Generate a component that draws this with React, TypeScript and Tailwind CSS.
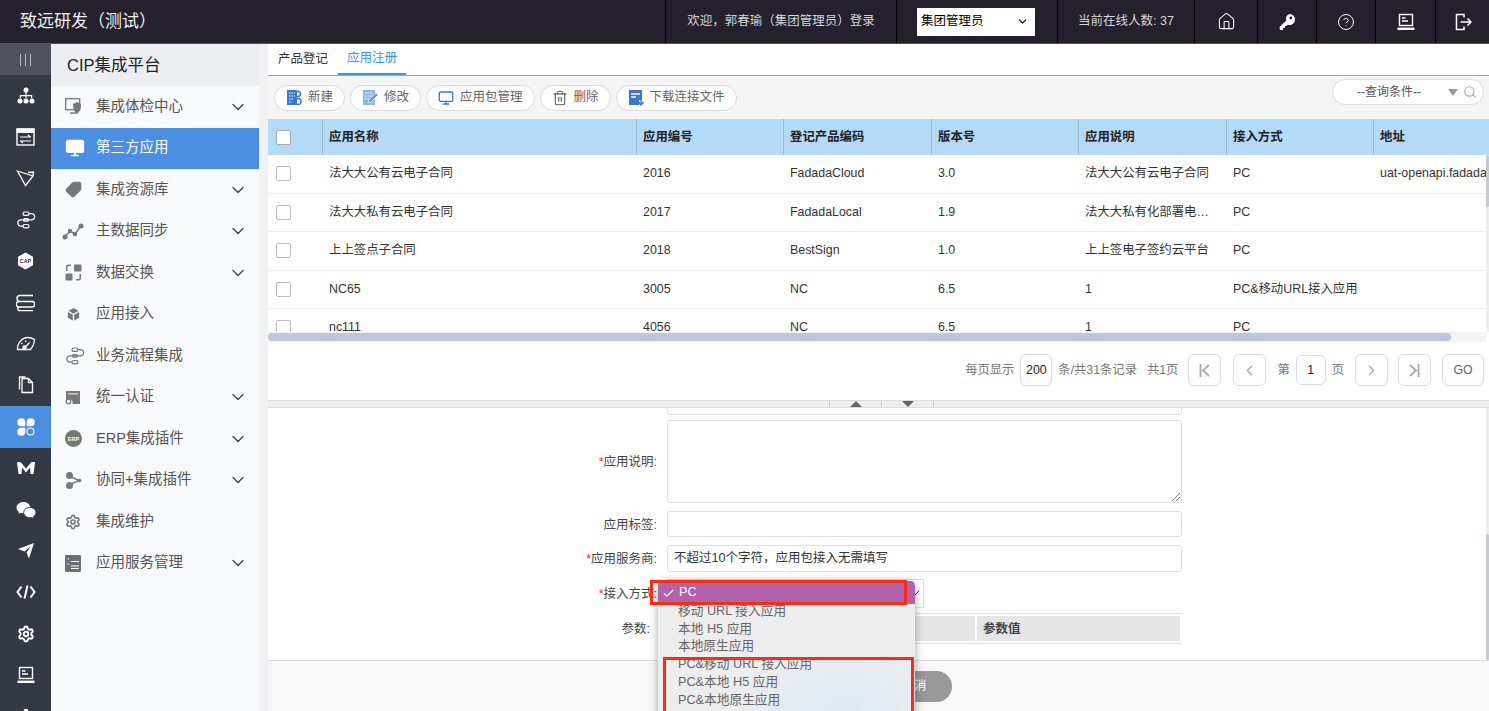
import { ChevronDown, Check, Home, CircleHelp, Search, Monitor, Trash2, ChevronLeft, ChevronRight, Box, Settings, Tag } from "lucide-react";

const font = { fontFamily: '"Liberation Sans", "Noto Sans CJK SC", sans-serif' };

// hand drawn icons, the packages have nothing close enough
const OrgIcon = () => (
  <svg width="18" height="18" viewBox="0 0 18 18" fill="white">
    <circle cx="9" cy="3" r="2.5" />
    <path d="M8.4 5h1.2v3h5.6v3H14V9.2H9.6V11H8.4V9.2H4V11H2.8V8h5.6z" />
    <circle cx="3" cy="14" r="2.5" />
    <circle cx="9" cy="14" r="2.5" />
    <circle cx="15" cy="14" r="2.5" />
  </svg>
);

const WindowIcon = () => (
  <svg width="19" height="18" viewBox="0 0 19 18" fill="none" stroke="white">
    <rect x="1" y="1" width="17" height="16" strokeWidth="1.4" />
    <rect x="1" y="1" width="17" height="3.5" fill="white" />
    <path d="M4 9h11M12 7l2.5 2M15 13H4M7 15l-2.5-2" strokeWidth="1.2" />
  </svg>
);

const FlagIcon = () => (
  <svg width="19" height="18" viewBox="0 0 19 18" fill="none" stroke="white" strokeWidth="1.3">
    <path d="M1.5 2 L17 7 L9.5 16.5 Z" />
    <path d="M12 3.5 L17.5 3 L17 7" />
  </svg>
);

const LoopIcon = ({ color = "white" }: { color?: string }) => (
  <svg width="20" height="18" viewBox="0 0 20 18" fill="none" stroke={color} strokeWidth="1.2">
    <rect x="7" y="1" width="6" height="3.4" rx="1.7" />
    <rect x="7" y="13.5" width="6" height="3.4" rx="1.7" />
    <path d="M13 2.7h2.5a3.1 3.1 0 0 1 0 6.2H4.5a3.2 3.2 0 0 0 0 6.3H7" />
    <rect x="7.5" y="7.6" width="5" height="2.6" rx="1.3" />
  </svg>
);

const CapIcon = () => (
  <svg width="17" height="18" viewBox="0 0 17 18">
    <path d="M8.5 .5 16 4.8v8.4l-7.5 4.3L1 13.2V4.8z" fill="white" />
    <text x="8.5" y="11" textAnchor="middle" fontSize="5.4" fontWeight="700" fill="#333844">CAP</text>
  </svg>
);

const StackIcon = () => (
  <svg width="19" height="18" viewBox="0 0 19 18" fill="none" stroke="white" strokeWidth="1.4">
    <path d="M3 1.500h14M4 1.500a3 3 0 0 0 0 6M1 7.500h16M3 7.500a2.700 2.700 0 0 0 0 5.500h13M16 7.500a2.700 2.700 0 0 1 0 5.500M1 13h1M3 13a2 2 0 0 0 0 3.600h14" />
  </svg>
);

const GaugeIcon = () => (
  <svg width="20" height="16" viewBox="0 0 20 16" fill="none" stroke="white" strokeWidth="1.3">
    <path d="M1.5 13.5C1 7 6 1.5 12 1.5c2.500 0 4.500.7 6.500 2-.2 4-1.500 7-4 10z" />
    <path d="M9 11.500l4.500-5M5 7l1.500 1M9.500 4.500l.3 1.500" />
    <circle cx="8.500" cy="11.500" r="1.500" fill="white" />
  </svg>
);

const FilesIcon = () => (
  <svg width="16" height="18" viewBox="0 0 16 18" fill="none" stroke="white" strokeWidth="1.3">
    <path d="M4 2.500h6.500L14.500 6.500V16.500H4z" />
    <path d="M1.500 13.500V1h6" />
    <path d="M10.500 2.500v4h4" />
  </svg>
);

const CloverIcon = () => (
  <svg width="18" height="18" viewBox="0 0 18 18" fill="white">
    <path d="M8.300 8.300H4.200a4 4 0 1 1 4.100-4.100z" />
    <path d="M9.700 8.300h4.100a4 4 0 1 0-4.100-4.100z" />
    <path d="M8.300 9.700H4.200a4 4 0 1 0 4.100 4.100z" />
    <circle cx="13.500" cy="13.500" r="3.500" fill="none" stroke="white" strokeWidth="1.100" />
  </svg>
);

const MIcon = () => (
  <svg width="18" height="14" viewBox="0 0 18 14" fill="white">
    <path d="M0 1h3.500L9 7.500 14.500 1H18L16.500 13H13.500L13 6.500 9 11.500 5 6.500 4.500 13h-3z" />
  </svg>
);

const WechatIcon = () => (
  <svg width="20" height="18" viewBox="0 0 20 18" fill="white">
    <path d="M7.500 1C3.600 1 .5 3.500.5 6.600c0 1.800 1 3.300 2.600 4.400L2.500 13l2.200-1.200c.8.200 1.700.4 2.600.4-.2-3.800 3.300-6.400 6.900-6.100C13.500 3 10.800 1 7.500 1z" />
    <path d="M19.500 11.500c0-2.600-2.600-4.800-5.700-4.800s-5.700 2.200-5.700 4.800 2.600 4.800 5.700 4.800c.7 0 1.300-.1 1.900-.3l1.800 1-.5-1.600c1.500-.9 2.500-2.300 2.500-3.900z" />
  </svg>
);

const PlaneIcon = () => (
  <svg width="18" height="18" viewBox="0 0 18 18" fill="white">
    <path d="M1 7 17 1 12 16.500 9.500 10.500 14 4 7.500 9.500z" />
  </svg>
);

const CodeIcon = () => (
  <svg width="20" height="16" viewBox="0 0 20 16" fill="none" stroke="white" strokeWidth="2">
    <path d="M5.500 2.500 1.500 8l4 5.500M14.500 2.500l4 5.500-4 5.500M11.500 1.500l-3 13" />
  </svg>
);

const TerminalLaptop = ({ size = 18 }: { size?: number }) => (
  <svg width={size} height={size} viewBox="0 0 18 18" fill="none" stroke="white" strokeWidth="1.400">
    <rect x="2.500" y="1.500" width="13" height="11" />
    <path d="M5 5h3.500M5 8h6" />
    <path d="M.5 15.800h17" strokeWidth="2.400" />
  </svg>
);

const KeyIcon = () => (
  <svg width="18" height="18" viewBox="0 0 18 18" fill="white">
    <path d="M11.500 1a5.500 5.500 0 0 1 0 11c-.7 0-1.200-.1-1.800-.3L8.500 13H7v2H5v2H2l-.5-3 6.800-6.500A5.500 5.500 0 0 1 11.500 1z" />
    <circle cx="12.800" cy="5" r="1.400" fill="#24212c" />
  </svg>
);

const LogoutIcon = () => (
  <svg width="18" height="18" viewBox="0 0 18 18" fill="none" stroke="white" strokeWidth="1.500">
    <path d="M10 4.500V1.500H2.500v15H10v-3" />
    <path d="M6.500 9H17M13.500 5.500 17 9l-3.500 3.500" />
  </svg>
);

const railIcons = [
  <OrgIcon />, <WindowIcon />, <FlagIcon />, <LoopIcon />, <CapIcon />, <StackIcon />, <GaugeIcon />, <FilesIcon />,
  <CloverIcon />, <MIcon />, <WechatIcon />, <PlaneIcon />, <CodeIcon />, <Settings size={18} strokeWidth={2.600} className="text-white" />, <TerminalLaptop />, <Settings size={18} fill="white" className="text-white" />,
];

const gray = "#777";

const menu: { label: string; icon: React.ReactNode; arrow?: boolean; active?: boolean }[] = [
  {
    label: "集成体检中心", arrow: true,
    icon: (
      <svg width="18" height="17" viewBox="0 0 18 17">
        <rect x=".7" y=".7" width="14" height="11" fill="none" stroke={gray} strokeWidth="1.300" />
        <path d="M5 15h6" stroke={gray} strokeWidth="1.500" />
        <path d="M8 6l4-2 4 2c0 5-1.500 8-4 10-2.500-2-4-5-4-10z" fill={gray} />
      </svg>
    ),
  },
  { label: "第三方应用", active: true, icon: <Monitor size={20} fill="white" className="text-white" /> },
  { label: "集成资源库", arrow: true, icon: <Tag size={17} fill={gray} className="text-[#777] scale-x-[-1]" /> },
  {
    label: "主数据同步", arrow: true,
    icon: (
      <svg width="22" height="17" viewBox="0 0 22 17" className="-ml-[3px]" fill={gray}>
        <path d="M3 14 8 8l5 3 6-8" fill="none" stroke={gray} strokeWidth="1.500" />
        <circle cx="3" cy="14" r="2.500" />
        <circle cx="8" cy="8" r="2.200" />
        <circle cx="13" cy="11" r="2.200" />
        <circle cx="19" cy="3" r="2.500" />
      </svg>
    ),
  },
  {
    label: "数据交换", arrow: true,
    icon: (
      <svg width="17" height="17" viewBox="0 0 17 17" fill={gray}>
        <rect x="9" y=".5" width="7.500" height="7" rx="1" />
        <rect x=".5" y="9.500" width="7" height="7" rx="1" />
        <path d="M1 7V2.500A2 2 0 0 1 3 .5h3v1.500H3.500a1 1 0 0 0-1 1V7zM16 10v4.500a2 2 0 0 1-2 2h-3V15h2.500a1 1 0 0 0 1-1v-4z" />
      </svg>
    ),
  },
  { label: "应用接入", icon: <Box size={17} fill={gray} className="text-[#f8f9fb]" /> },
  { label: "业务流程集成", icon: <LoopIcon color={gray} /> },
  {
    label: "统一认证", arrow: true,
    icon: (
      <svg width="16" height="15" viewBox="0 0 16 15" fill={gray}>
        <path d="M1 1h14v13H7.500a4 4 0 0 0-6.500-4z" />
        <circle cx="3.500" cy="11.500" r="2.300" fill="none" stroke={gray} strokeWidth="1.300" />
        <path d="M3 3.800h10" stroke="#f8f9fb" />
      </svg>
    ),
  },
  {
    label: "ERP集成插件", arrow: true,
    icon: (
      <svg width="17" height="17" viewBox="0 0 17 17">
        <circle cx="8.500" cy="8.500" r="8.500" fill={gray} />
        <text x="8.500" y="10.500" textAnchor="middle" fontSize="5.500" fontWeight="700" fill="white">ERP</text>
      </svg>
    ),
  },
  {
    label: "协同+集成插件", arrow: true,
    icon: (
      <svg width="18" height="17" viewBox="0 0 18 17" fill={gray}>
        <path d="M4 4l10 4.500L4 13" fill="none" stroke={gray} strokeWidth="1.500" />
        <circle cx="4.500" cy="3.500" r="3.500" />
        <circle cx="4.500" cy="13.500" r="3.500" />
        <circle cx="14.500" cy="8.500" r="1.800" />
      </svg>
    ),
  },
  { label: "集成维护", icon: <Settings size={16} strokeWidth={2.500} className="text-[#777]" /> },
  {
    label: "应用服务管理", arrow: true,
    icon: (
      <svg width="16" height="17" viewBox="0 0 16 17">
        <rect width="16" height="17" rx="1" fill="#6b7078" />
        <path d="M2.500 4h1.500M6 6.500h8M2.500 9h1.500M6 11h8M6 13.500h8" stroke="white" />
      </svg>
    ),
  },
];

const columns = [
  { label: "应用名称", w: "w-[314px]" },
  { label: "应用编号", w: "w-[147px]" },
  { label: "登记产品编码", w: "w-[148px]" },
  { label: "版本号", w: "w-[147px]" },
  { label: "应用说明", w: "w-[148px]" },
  { label: "接入方式", w: "w-[147px]" },
  { label: "地址", w: "w-[120px]" },
];

const rows = [
  ["法大大公有云电子合同", "2016", "FadadaCloud", "3.0", "法大大公有云电子合同", "PC", "uat-openapi.fadada"],
  ["法大大私有云电子合同", "2017", "FadadaLocal", "1.9", "法大大私有化部署电…", "PC", ""],
  ["上上签点子合同", "2018", "BestSign", "1.0", "上上签电子签约云平台", "PC", ""],
  ["NC65", "3005", "NC", "6.5", "1", "PC&移动URL接入应用", ""],
  ["nc111", "4056", "NC", "6.5", "1", "PC", ""],
];

const DocPlus = () => (
  <svg width="16" height="17" viewBox="0 0 16 17">
    <rect x="1" y="1" width="10" height="15" fill="#3a78d0" />
    <path d="M3 4h6M3 7h6M3 10h4M3 13h3" stroke="white" strokeDasharray="1.500 1" />
    <circle cx="12" cy="5" r="2.500" fill="none" stroke="#3a78d0" strokeWidth="1.500" />
    <circle cx="12" cy="12.500" r="3" fill="none" stroke="#3a78d0" strokeWidth="1.500" />
  </svg>
);

const DocEdit = () => (
  <svg width="16" height="17" viewBox="0 0 16 17">
    <rect x="1" y="1" width="12" height="15" fill="#8db6ea" />
    <path d="M3 4h8M3 7h8M3 10h5" stroke="white" strokeDasharray="1.500 1" />
    <path d="M6 14l1-3 7-7 2 2-7 7z" fill="#5b93dc" stroke="white" strokeWidth=".6" />
  </svg>
);

const DocDown = () => (
  <svg width="16" height="17" viewBox="0 0 16 17">
    <path d="M1 1h13v10h-3v5H1z" fill="#3a78d0" />
    <path d="M3 5h9M3 8h5" stroke="white" strokeWidth="1.300" />
    <path d="M13 10v5M10.500 13l2.500 3 2.500-3" fill="none" stroke="#3a78d0" strokeWidth="1.400" />
  </svg>
);

function ToolButton({ label, icon }: { label: string; icon: React.ReactNode }) {
  return (
    <button className="h-[26px] pl-[11px] pr-[11px] flex items-center gap-[6px] bg-white border border-[#dcdcdc] rounded-full text-[12.500px] text-[#666] whitespace-nowrap">
      {icon}
      {label}
    </button>
  );
}

function PageBtn({ children, className = "" }: { children: React.ReactNode; className?: string }) {
  return (
    <div className={`w-[33px] h-[32px] shrink-0 border border-[#ddd] rounded-[6px] flex items-center justify-center text-[#aaa] ${className}`}>
      {children}
    </div>
  );
}

function FormRow({ label, required, className = "", pad = "pr-[10px]", children }: { label: string; required?: boolean; className?: string; pad?: string; children: React.ReactNode }) {
  return (
    <div className={`flex items-center ${className}`}>
      <div className={`w-[399px] shrink-0 pt-[2px] text-right text-[12.500px] text-[#444] whitespace-nowrap ${pad}`}>
        {required && <span className="text-[#e33]">*</span>}
        {label}
      </div>
      {children}
    </div>
  );
}

const inputBox = "w-[515px] border border-[#e2e2e2] rounded-[3px]";

export default function App() {
  return (
    <div style={font} className="w-[1489px] h-[711px] overflow-hidden flex flex-col bg-white relative">
      {/* top bar */}
      <header className="h-[44px] shrink-0 bg-[#24212c] flex items-center text-[#d5d5d8] border-b border-[#555] text-[12.500px] whitespace-nowrap">
        <div className="w-[665px] pl-[20px] text-[17px] text-[#eee]">致远研发（测试）</div>
        <div className="h-full w-[231px] flex items-center justify-center border-l border-black">欢迎，郭春瑜（集团管理员）登录</div>
        <div className="h-full w-[161px] flex items-center pl-[20px] border-l border-black">
          <div className="w-[118px] h-[28px] bg-white text-black flex items-center justify-between pl-[4px] pr-[6px]">
            集团管理员
            <ChevronDown size={13} />
          </div>
        </div>
        <div className="h-full w-[137px] flex items-center justify-center border-l border-black">当前在线人数: 37</div>
        <div className="h-full w-[63px] flex items-center justify-center border-l border-black"><Home size={19} strokeWidth={1.300} className="text-white" /></div>
        <div className="h-full w-[59px] flex items-center justify-center border-l border-black"><KeyIcon /></div>
        <div className="h-full w-[59px] flex items-center justify-center border-l border-black"><CircleHelp size={18} strokeWidth={1.300} className="text-white" /></div>
        <div className="h-full w-[60px] flex items-center justify-center border-l border-black"><TerminalLaptop /></div>
        <div className="h-full flex-1 flex items-center justify-center border-l border-black"><LogoutIcon /></div>
      </header>

      <div className="flex flex-1 min-h-0">
        {/* icon rail */}
        <nav className="w-[51px] shrink-0 bg-[#333844] flex flex-col overflow-hidden">
          <div className="h-[31px] shrink-0 bg-[#50535e] flex items-center justify-center gap-[4px]">
            <span className="w-px h-[12px] bg-[#bbb]" />
            <span className="w-px h-[12px] bg-[#bbb]" />
            <span className="w-px h-[12px] bg-[#bbb]" />
          </div>
          {railIcons.map((icon, i) => (
            <div key={i} className={`h-[41.400px] shrink-0 flex items-center justify-center ${i === 8 ? "bg-[#4a8fe2]" : ""}`}>
              {icon}
            </div>
          ))}
        </nav>

        {/* menu */}
        <aside className="w-[208px] shrink-0 bg-[#f8f9fb] flex flex-col">
          <div className="h-[42px] shrink-0 bg-[#eceef1] pl-[16px] pt-[1px] flex items-center text-[16.500px] text-[#222]">CIP集成平台</div>
          {menu.map((m) => (
            <div key={m.label} className={`h-[41.500px] shrink-0 flex items-center pl-[14px] pr-[11px] text-[14.500px] ${m.active ? "bg-[#4a8fe2] text-white" : "text-[#555]"}`}>
              <span className="w-[31px] shrink-0 flex">{m.icon}</span>
              <span className="flex-1 whitespace-nowrap">{m.label}</span>
              {m.arrow && <ChevronDown size={20} strokeWidth={1.600} className="text-[#444]" />}
            </div>
          ))}
        </aside>

        <div className="w-[9px] shrink-0 bg-[#f1f1f3]" />

        {/* main */}
        <main className="flex-1 min-w-0 flex flex-col relative">
          <div className="h-[32px] shrink-0 flex items-end border-b border-[#6db3f5] text-[12.500px]">
            <div className="h-full px-[10px] flex items-center text-[#333]">产品登记</div>
            <div className="h-full px-[9px] flex items-center text-[#3d95ea] border-b-2 border-[#3d95ea]">应用注册</div>
          </div>

          <div className="h-[43px] shrink-0 bg-[#f5f5f5] flex items-center pl-[6px] pr-[5px] gap-[5px]">
            <ToolButton label="新建" icon={<DocPlus />} />
            <ToolButton label="修改" icon={<DocEdit />} />
            <ToolButton label="应用包管理" icon={<Monitor size={16} className="text-[#3a78d0]" />} />
            <ToolButton label="删除" icon={<Trash2 size={16} className="text-[#777]" />} />
            <ToolButton label="下载连接文件" icon={<DocDown />} />
            <div className="ml-auto self-start mt-[3px] w-[152px] h-[26px] bg-white border border-[#ddd] rounded-full flex items-center text-[12px] text-[#555] pl-[24px] pr-[6px]">
              --查询条件--
              <span className="ml-auto w-0 h-0 border-x-[5px] border-x-transparent border-t-[7px] border-t-[#999]" />
              <Search size={14} className="ml-[5px] text-[#aaa]" />
            </div>
          </div>

          {/* table */}
          <div className="h-[223px] shrink-0 overflow-hidden relative text-[12.400px]">
            <div className="flex h-[36px] bg-[#b3daf7] font-bold text-[#222] w-[1230px]">
              <div className="w-[55px] shrink-0 flex items-center pl-[8px] border-r border-[#9dbcd4]">
                <span className="w-[15px] h-[15px] bg-white border border-[#aaa] rounded-[2px]" />
              </div>
              {columns.map((c) => (
                <div key={c.label} className={`${c.w} shrink-0 flex items-center pl-[6px] border-r border-[#9dbcd4]`}>{c.label}</div>
              ))}
            </div>
            {rows.map((r) => (
              <div key={r[0]} className="flex h-[38.500px] border-b border-[#eee] text-[#333] w-[1230px]">
                <div className="w-[55px] shrink-0 flex items-center pl-[8px]">
                  <span className="w-[15px] h-[15px] bg-white border border-[#bbb] rounded-[2px]" />
                </div>
                {r.map((cell, i) => (
                  <div key={i} className={`${columns[i].w} shrink-0 flex items-center pl-[6px] whitespace-nowrap`}>{cell}</div>
                ))}
              </div>
            ))}
            <div className="absolute left-0 right-[3px] bottom-0 h-[10px] bg-[#f3f3f3]">
              <div className="w-[1183px] h-[8px] mt-[1px] rounded-full bg-[#bcc8d8]" />
            </div>
            <div className="absolute right-0 top-[36px] bottom-[10px] w-[3px] bg-[#eeeeee]">
              <div className="h-[52px] bg-[#c5cbd3] rounded-full" />
            </div>
          </div>

          {/* pagination */}
          <div className="h-[58px] shrink-0 flex items-center justify-end pr-[5px] pb-[2px] text-[12.300px] text-[#777] whitespace-nowrap">
            每页显示
            <span className="ml-[6px] mr-[6px] w-[32px] h-[32px] border border-[#ddd] rounded-[6px] flex items-center justify-center text-[#222]">200</span>
            条/共31条记录
            <span className="mx-[10px]">共1页</span>
            <PageBtn>
              <svg width="11" height="13" viewBox="0 0 11 13" fill="none" stroke="currentColor" strokeWidth="1.800"><path d="M1.500 0v13M10 1 4 6.500 10 12" /></svg>
            </PageBtn>
            <PageBtn className="ml-[12px]"><ChevronLeft size={17} /></PageBtn>
            <span className="ml-[11px]">第</span>
            <span className="mx-[6px] w-[30px] h-[30px] border border-[#ddd] rounded-[6px] flex items-center justify-center text-[#222]">1</span>
            页
            <PageBtn className="ml-[11px]"><ChevronRight size={17} /></PageBtn>
            <PageBtn className="ml-[10px]">
              <svg width="11" height="13" viewBox="0 0 11 13" fill="none" stroke="currentColor" strokeWidth="1.800"><path d="M9.500 0v13M1 1l6 5.500L1 12" /></svg>
            </PageBtn>
            <div className="ml-[11px] w-[42px] h-[32px] border border-[#ddd] rounded-[6px] flex items-center justify-center text-[#666]">GO</div>
          </div>

          {/* splitter between list and form */}
          <div className="h-[8px] shrink-0 bg-[#eeeeee] border-y border-[#dddddd] flex justify-center relative">
            <div className="absolute left-[561px] top-0 bottom-0 w-[53px] border-x border-[#ccc] flex items-center justify-center">
              <span className="w-0 h-0 border-x-[6px] border-x-transparent border-b-[6px] border-b-[#666]" />
            </div>
            <div className="absolute left-[614px] top-0 bottom-0 w-[52px] border-r border-[#ccc] flex items-center justify-center">
              <span className="w-0 h-0 border-x-[6px] border-x-transparent border-t-[6px] border-t-[#666]" />
            </div>
          </div>

          {/* form */}
          <div className="h-[253px] shrink-0 relative border-b border-[#ddd]">
            <div className="ml-[399px] w-[515px] h-[7px] border border-t-0 border-[#e2e2e2] rounded-b-[3px]" />
            <FormRow label="应用说明:" required className="mt-[5px]">
              <div className={`${inputBox} h-[83px] relative`}>
                <svg width="8" height="8" viewBox="0 0 8 8" className="absolute right-[1px] bottom-[1px]" stroke="#666" strokeWidth=".8"><path d="M0 8 8 0M4 8l4-4" /></svg>
              </div>
            </FormRow>
            <FormRow label="应用标签:" className="mt-[8px]">
              <div className={`${inputBox} h-[26px]`} />
            </FormRow>
            <FormRow label="应用服务商:" required className="mt-[8px]">
              <div className={`${inputBox} h-[27px] flex items-center pl-[6px] text-[12.500px] text-[#333]`}>不超过10个字符，应用包接入无需填写</div>
            </FormRow>
            <FormRow label="接入方式:" required className="mt-[7px]">
              <div className="w-[257px] h-[29px] border border-[#ddd] flex items-center justify-end pr-[2px]">
                <Check size={12} className="text-[#333]" />
              </div>
            </FormRow>
            <FormRow label="参数:" pad="pr-[17px]" className="mt-[5px]">
              <div className="w-[515px] h-[31px] flex justify-end gap-[2px] py-[2px] border-y border-[#e2e2e2] text-[12.500px] font-bold text-[#444] pr-[2px]">
                <div className="w-[204px] bg-[#e6e6e6]" />
                <div className="w-[203px] bg-[#e6e6e6] flex items-center pl-[6px] pt-[1px]">参数值</div>
              </div>
            </FormRow>
            <div className="absolute right-0 top-0 bottom-0 w-[3px] bg-[#eeeeee] flex flex-col justify-end">
              <div className="h-[126px] bg-[#c5cbd3] rounded-full" />
            </div>
          </div>
          <div className="flex-1 bg-[#f8f8f8] flex items-center justify-center">
            <div className="ml-[71px] w-[76px] h-[31px] rounded-full bg-[#999] text-white text-[12.500px] flex items-center justify-center">取消</div>
          </div>
        </main>
      </div>

      {/* native select menu open over the form */}
      <div className="absolute left-[658px] top-[580px] w-[257px] h-[140px] bg-[#ededed] rounded-[6px] shadow-[0_2px_10px_rgba(0,0,0,0.35)] text-[12.700px] text-[#666] overflow-hidden">
        <div className="absolute left-[64px] top-[72px] w-[190px] h-[70px] bg-[radial-gradient(ellipse_at_65%_75%,#dce9f3_0%,#ededed_75%)]" />
        <div className="absolute left-0 right-0 top-[1px] h-[23px] bg-[#b063a8] flex items-center text-white pl-[4px] gap-[4px] pt-[1px]">
          <Check size={13} />
          PC
        </div>
        <div className="relative pt-[23px] pl-[20px] leading-[17.700px] whitespace-nowrap">
          <div>移动 URL 接入应用</div>
          <div>本地 H5 应用</div>
          <div>本地原生应用</div>
          <div>PC&移动 URL 接入应用</div>
          <div>PC&本地 H5 应用</div>
          <div>PC&本地原生应用</div>
        </div>
      </div>
      {/* red markers drawn on the screenshot */}
      <div className="absolute left-[650px] top-[580px] w-[257px] h-[25px] border-[3px] border-[#ff2a12]" />
      <div className="absolute left-[663px] top-[657px] w-[251px] h-[70px] border-[3px] border-[#ff2a12]" />
    </div>
  );
}
